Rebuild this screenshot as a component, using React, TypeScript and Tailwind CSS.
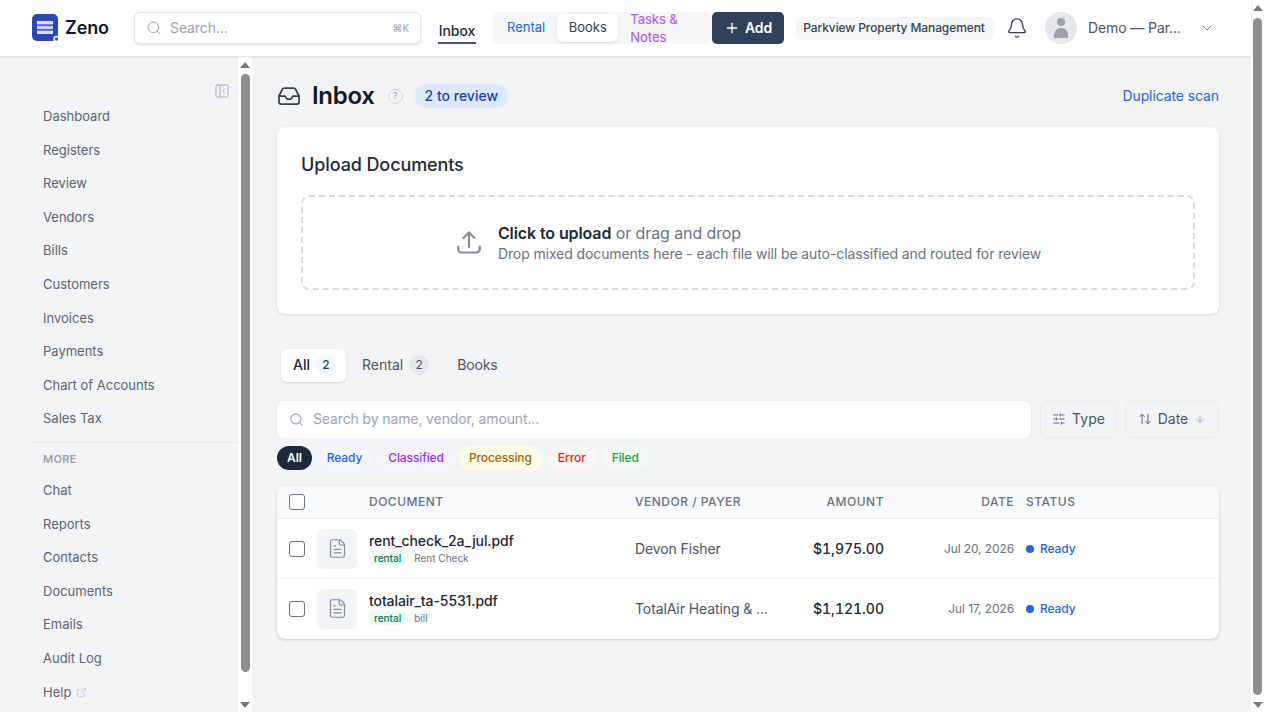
import {
  ArrowDown,
  ArrowUpDown,
  Bell,
  ChevronDown,
  ExternalLink,
  FileText,
  Inbox,
  PanelLeftClose,
  Plus,
  Search,
  SlidersHorizontal,
} from "lucide-react";

const MAIN_NAV = ["Dashboard", "Registers", "Review", "Vendors", "Bills", "Customers", "Invoices", "Payments", "Chart of Accounts", "Sales Tax"];
const MORE_NAV = ["Chat", "Reports", "Contacts", "Documents", "Emails", "Audit Log"];

const ROWS = [
  { name: "rent_check_2a_jul.pdf", kind: "Rent Check", vendor: "Devon Fisher", amount: "$1,975.00", date: "Jul 20, 2026" },
  { name: "totalair_ta-5531.pdf", kind: "bill", vendor: "TotalAir Heating & ...", amount: "$1,121.00", date: "Jul 17, 2026" },
];

const CHIPS = [
  { label: "All", cls: "bg-[#1e293b] text-white font-semibold px-[10px]" },
  { label: "Ready", cls: "bg-[#f3f6fd] text-[#2563eb] px-[11px]" },
  { label: "Classified", cls: "bg-[#f8f4fd] text-[#9333ea] px-[11px]" },
  { label: "Processing", cls: "bg-[#fefce8] text-[#a16207] pl-[10px] pr-[11px]" },
  { label: "Error", cls: "bg-[#fef4f4] text-[#dc2626] pl-[11px] pr-[12px]" },
  { label: "Filed", cls: "bg-[#f1fbf4] text-[#16a34a] px-[10px]" },
];

const ROW_GRID = "grid grid-cols-[92px_266px_137px_112px_130px_1fr] items-center";

function Logo() {
  return (
    <svg width="28" height="28" viewBox="0 0 28 28" className="shrink-0">
      <rect x="0" y="0" width="26" height="27" rx="5" fill="#2b46b5" />
      <rect x="5" y="7" width="16" height="3.4" fill="#d9def2" />
      <rect x="5" y="11.8" width="16" height="3.4" fill="#c3cbea" />
      <rect x="5" y="16.6" width="16" height="3.4" fill="#d9def2" />
      <circle cx="24.5" cy="25" r="3.2" fill="#fff" />
      <circle cx="24.5" cy="25" r="1.8" fill="#46608a" />
    </svg>
  );
}

function Header() {
  return (
    <header className="relative z-10 flex h-14 shrink-0 items-center bg-white pl-8 tracking-[-0.1px] shadow-[0_1px_3px_rgba(0,0,0,0.12)]">
      <Logo />
      <span className="ml-[5px] w-[69px] shrink-0 text-lg font-semibold text-[#111827]">Zeno</span>
      <div className="flex h-8 w-[287px] shrink-0 items-center rounded-md border border-[#e5e7eb] bg-white px-[11px] shadow-sm">
        <Search className="h-4 w-4 text-[#9ca3af]" strokeWidth={1.5} />
        <span className="ml-[8px] flex-1 text-sm text-[#9ca3af]">Search...</span>
        <span className="text-[10px] text-[#9ca3af]">⌘K</span>
      </div>
      <div className="ml-[17px] flex h-8 w-[38px] shrink-0 flex-col items-center justify-end">
        <span className="text-sm leading-5 font-medium whitespace-nowrap text-[#1f2937]">Inbox</span>
        <div className="mt-[1px] h-[2px] w-full bg-[#4b5563]" />
      </div>
      <div className="ml-[17px] flex h-8 w-[219px] shrink-0 items-center rounded-md bg-[#f5f6f8] pl-[14px]">
        <span className="text-[13px] tracking-normal text-[#2563eb]">Rental</span>
        <span className="ml-3 flex h-7 w-[61px] items-center justify-center rounded-md bg-white text-[13px] tracking-normal text-[#374151] shadow-sm">Books</span>
        <span className="ml-3 w-[60px] text-[13px] leading-[18px] font-medium text-[#9333ea]/75">Tasks &amp; Notes</span>
      </div>
      <button className="flex h-8 w-[72px] shrink-0 items-center justify-center gap-[5px] rounded-[5px] bg-[#2f425a] text-sm font-semibold text-white">
        <Plus className="h-4 w-4" strokeWidth={2} />
        Add
      </button>
      <span className="ml-3 flex h-[23px] w-[198px] shrink-0 items-center justify-center rounded-md bg-[#f5f6f8] pr-[2px] text-xs font-medium whitespace-nowrap text-[#374151]">
        Parkview Property Management
      </span>
      <Bell className="ml-[12px] h-[22px] w-[22px] shrink-0 text-[#374151]" strokeWidth={1.5} />
      <div className="ml-[17px] flex h-8 w-8 shrink-0 items-center justify-center overflow-hidden rounded-full bg-[#e5e7eb]">
        <svg width="16" height="22" viewBox="0 0 16 22">
          <circle cx="8" cy="5" r="4" fill="#9ca3af" />
          <path d="M1 21c-.6-7 2.500-10 7-10s7.600 3 7 10z" fill="#9ca3af" />
        </svg>
      </div>
      <span className="ml-[11px] w-[96px] shrink-0 text-sm whitespace-nowrap text-[#4b5563]">Demo — Par...</span>
      <ChevronDown className="ml-[15px] h-4 w-4 shrink-0 text-[#6b7280]" strokeWidth={1.5} />
    </header>
  );
}

function SideLink({ label }: { label: string }) {
  return <div className="flex h-[33.6px] items-center pl-[43px] text-[13px] text-[#5b6472]">{label}</div>;
}

function Sidebar() {
  return (
    <aside className="flex w-[238px] shrink-0 flex-col bg-[#f3f4f6]">
      <div className="flex h-[43px] shrink-0 items-end justify-end pr-2">
        <PanelLeftClose className="h-4 w-4 text-[#9ca3af]" strokeWidth={1.25} />
      </div>
      <nav className="pt-[1px]">
        {MAIN_NAV.map((item) => (
          <SideLink key={item} label={item} />
        ))}
      </nav>
      <div className="mt-[6px] ml-[31px] border-t border-[#e5e7eb]" />
      <div className="flex h-[31px] items-center pt-[1px] pl-[43px] text-[11px] font-semibold tracking-wide text-[#9ca3af]">MORE</div>
      <nav>
        {MORE_NAV.map((item) => (
          <SideLink key={item} label={item} />
        ))}
        <div className="flex h-[33.6px] items-center gap-[5px] pl-[43px] text-[13px] text-[#5b6472]">
          Help
          <ExternalLink className="h-[11px] w-[11px] text-[#c4c8cf]" />
        </div>
      </nav>
    </aside>
  );
}

function SidebarScrollbar() {
  return (
    <div className="flex w-[14px] shrink-0 flex-col items-center bg-white pt-[6px]">
      <div className="h-0 w-0 border-x-[5px] border-b-[6px] border-x-transparent border-b-[#7a7a7a]" />
      <div className="mt-[6px] ml-[1px] h-[598px] w-[9px] rounded-full bg-[#8f8f8f]" />
      <div className="mt-[30px] h-0 w-0 border-x-[5px] border-t-[6px] border-x-transparent border-t-[#7a7a7a]" />
    </div>
  );
}

function PageScrollbar() {
  return (
    <div className="flex w-[14px] shrink-0 flex-col items-center bg-white pt-[5px] pb-[4px]">
      <div className="h-0 w-0 border-x-[5px] border-b-[6px] border-x-transparent border-b-[#7a7a7a]" />
      <div className="my-[7px] mr-[1px] w-[9px] flex-1 rounded-full bg-[#8f8f8f]" />
      <div className="h-0 w-0 border-x-[5px] border-t-[6px] border-x-transparent border-t-[#7a7a7a]" />
    </div>
  );
}

function UploadCard() {
  return (
    <section className="mt-[19px] rounded-lg bg-white px-6 pt-[24px] pb-6 shadow-[0_1px_3px_rgba(0,0,0,0.1)]">
      <h2 className="text-lg leading-7 font-medium tracking-[-0.1px] text-[#1f2937]">Upload Documents</h2>
      <div className="mt-4 flex h-[95px] items-center justify-center rounded-lg border-2 border-dashed border-[#d8dbe0]">
        <div className="flex w-7 justify-center">
          <svg width="24" height="23" viewBox="0 0 24 23" fill="none" stroke="#868d9a" strokeWidth="2.2" strokeLinecap="round" strokeLinejoin="round">
            <path d="M12 16V1.500" />
            <path d="M6.500 7 12 1.500 17.500 7" />
            <path d="M1.200 15.500v2.500a3.500 3.500 0 0 0 3.500 3.500h14.600a3.500 3.500 0 0 0 3.500-3.500v-2.500" />
          </svg>
        </div>
        <div className="ml-[15px] tracking-[-0.1px]">
          <p className="text-base leading-[22px] text-[#6b7280]">
            <span className="font-semibold text-[#1f2937]">Click to upload</span> or drag and drop
          </p>
          <p className="text-sm leading-5 text-[#6b7280]">Drop mixed documents here - each file will be auto-classified and routed for review</p>
        </div>
      </div>
    </section>
  );
}

function DocTable() {
  return (
    <section className="mt-4 overflow-hidden rounded-lg bg-white shadow-[0_1px_3px_rgba(0,0,0,0.18)]">
      <div className={`${ROW_GRID} h-[33px] border-b border-[#e5e7eb] bg-[#f9fafb] text-xs font-medium tracking-[0.5px] text-[#6b7280]`}>
        <div className="pl-3">
          <div className="h-4 w-4 rounded-[3px] border border-[#6b7280] bg-white" />
        </div>
        <div>DOCUMENT</div>
        <div>VENDOR / PAYER</div>
        <div className="text-right">AMOUNT</div>
        <div className="text-right">DATE</div>
        <div className="pl-3">STATUS</div>
      </div>
      {ROWS.map((row, i) => (
        <div key={row.name} className={`${ROW_GRID} h-[60px] border-b ${i === 0 ? "border-[#f3f4f6]" : "border-transparent"}`}>
          <div className="flex items-center pl-3">
            <div className="h-4 w-4 rounded-[3px] border border-[#6b7280] bg-white" />
            <div className="ml-3 flex h-10 w-10 items-center justify-center rounded-md bg-[#f3f4f6]">
              <FileText className="h-[21px] w-[21px] text-[#868d9a]" strokeWidth={1.4} />
            </div>
          </div>
          <div>
            <div className="text-sm leading-[18px] font-medium tracking-[-0.1px] text-[#1f2937]">{row.name}</div>
            <div className="mt-[1px] flex items-center gap-[8px] text-[10px] leading-[14px]">
              <span className="rounded-[3px] bg-[#ecfdf5] px-[5px] font-medium text-[#047857]">rental</span>
              <span className="text-[#6b7280]">{row.kind}</span>
            </div>
          </div>
          <div className="pr-[4px] text-sm tracking-[-0.1px] whitespace-nowrap text-[#4b5563]">{row.vendor}</div>
          <div className="text-right text-sm font-medium text-[#1f2937] tabular-nums">{row.amount}</div>
          <div className="text-right text-xs tracking-[-0.1px] text-[#6b7280]">{row.date}</div>
          <div className="flex items-center gap-[6px] pl-3 text-xs font-medium tracking-[-0.1px] text-[#2563eb]">
            <span className="h-2 w-2 rounded-full bg-[#2563eb]" />
            Ready
          </div>
        </div>
      ))}
    </section>
  );
}

function CountBadge({ n, cls }: { n: number; cls: string }) {
  return <span className={`flex h-5 w-5 items-center justify-center rounded-full text-xs ${cls}`}>{n}</span>;
}

export default function App() {
  return (
    <div className="flex h-[712px] w-[1265px] overflow-hidden bg-[#f3f4f6] font-['Inter',sans-serif]">
      <div className="flex w-[1251px] shrink-0 flex-col">
        <Header />
        <div className="flex min-h-0 flex-1">
          <Sidebar />
          <SidebarScrollbar />
          <main className="flex-1 pt-[28px] pr-8 pl-[25px]">
            <div className="flex h-6 items-center">
              <Inbox className="h-6 w-6 text-[#374151]" strokeWidth={1.75} />
              <h1 className="ml-[11px] text-2xl font-semibold tracking-[-0.3px] text-[#111827]">Inbox</h1>
              <span className="ml-[13px] flex h-[15px] w-[15px] items-center justify-center rounded-full border border-[#d1d5db] bg-[#f3f4f6] text-[9px] text-[#9ca3af]">?</span>
              <span className="ml-3 flex h-6 items-center rounded-full bg-[#dbeafe] px-[10px] text-sm font-medium text-[#1e40af]">2 to review</span>
              <span className="ml-auto text-sm tracking-[-0.1px] text-[#2563eb]">Duplicate scan</span>
            </div>
            <UploadCard />
            <div className="mt-[35px] flex h-[33px] items-center pl-1 text-sm">
              <div className="flex h-[33px] w-[65px] items-center gap-[6px] rounded-md bg-white pb-[1px] pl-3 font-medium text-[#1f2937] shadow-sm">
                All
                <CountBadge n={2} cls="bg-[#eff6ff] text-[#374151]" />
              </div>
              <div className="ml-4 flex items-center gap-[6px] pb-[1px] text-[#4b5563]">
                Rental
                <CountBadge n={2} cls="bg-[#e5e7eb] text-[#4b5563]" />
              </div>
              <span className="ml-7 pb-[2px] tracking-[-0.1px] text-[#4b5563]">Books</span>
            </div>
            <div className="mt-[19px] flex h-[37px] items-center gap-2">
              <div className="flex h-full flex-1 items-center rounded-md bg-white pb-[1px] pl-3 shadow-[0_0_1px_rgba(0,0,0,0.2)]">
                <Search className="h-[15px] w-[15px] text-[#9ca3af]" strokeWidth={1.75} />
                <span className="ml-[9px] text-sm tracking-[-0.12px] text-[#9ca3af]">Search by name, vendor, amount...</span>
              </div>
              <button className="ml-[1px] flex h-full w-[77px] items-center justify-center gap-[6px] rounded-md border border-[#e9ebee] pb-[1px] text-sm text-[#4b5563]">
                <SlidersHorizontal className="h-[14px] w-[14px]" strokeWidth={1.5} />
                Type
              </button>
              <button className="flex h-full w-[94px] items-center justify-center gap-[6px] rounded-md border border-[#e9ebee] pb-[1px] text-sm text-[#4b5563]">
                <ArrowUpDown className="h-[14px] w-[14px]" strokeWidth={1.5} />
                Date
                <ArrowDown className="h-3 w-3 text-[#9ca3af]" strokeWidth={1.5} />
              </button>
            </div>
            <div className="mt-2 flex h-6 items-center gap-[4px] tracking-[-0.1px]">
              {CHIPS.map((chip) => (
                <span key={chip.label} className={`flex h-6 items-center rounded-full text-xs font-medium ${chip.cls}`}>
                  {chip.label}
                </span>
              ))}
            </div>
            <DocTable />
          </main>
        </div>
      </div>
      <PageScrollbar />
    </div>
  );
}
